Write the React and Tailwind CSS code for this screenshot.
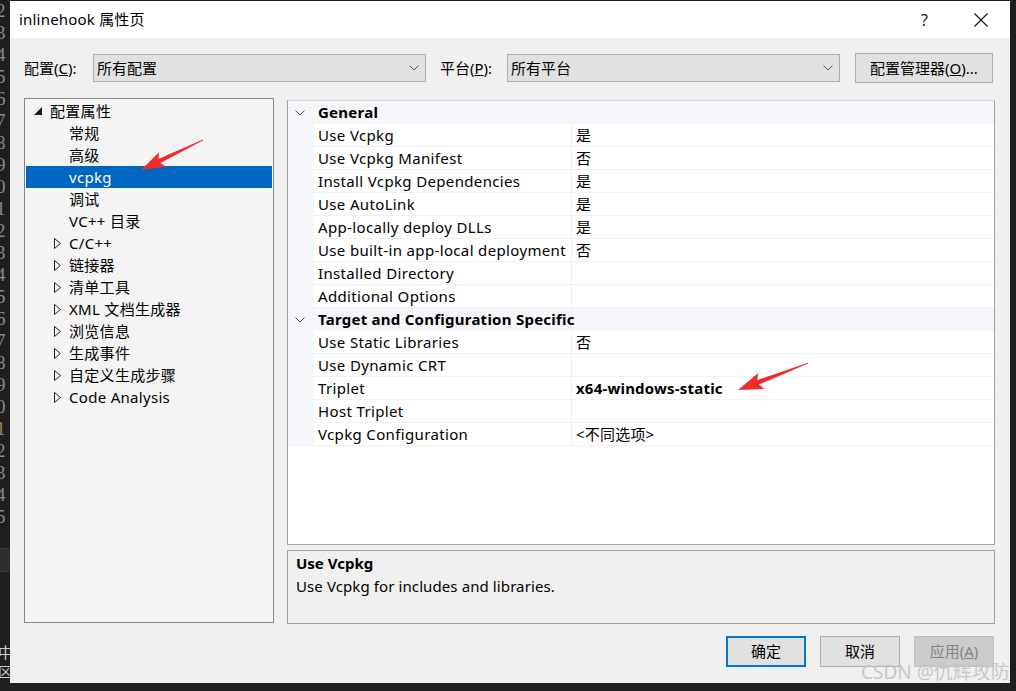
import React from "react";

const FONT = { fontFamily: '"Noto Sans", "Noto Sans CJK SC", sans-serif' };

const lineDigits = ["2","3","4","5","6","7","8","9","0","1","2","3","4","5","6","7","8","9","0","1","2","3","4","5"];

const treeItems = [
  { label: "配置属性", kind: "open" },
  { label: "常规", kind: "leaf" },
  { label: "高级", kind: "leaf" },
  { label: "vcpkg", kind: "leaf", selected: true },
  { label: "调试", kind: "leaf" },
  { label: "VC++ 目录", kind: "leaf" },
  { label: "C/C++", kind: "closed" },
  { label: "链接器", kind: "closed" },
  { label: "清单工具", kind: "closed" },
  { label: "XML 文档生成器", kind: "closed" },
  { label: "浏览信息", kind: "closed" },
  { label: "生成事件", kind: "closed" },
  { label: "自定义生成步骤", kind: "closed" },
  { label: "Code Analysis", kind: "closed" },
];

const gridRows = [
  { header: "General" },
  { name: "Use Vcpkg", value: "是" },
  { name: "Use Vcpkg Manifest", value: "否" },
  { name: "Install Vcpkg Dependencies", value: "是" },
  { name: "Use AutoLink", value: "是" },
  { name: "App-locally deploy DLLs", value: "是" },
  { name: "Use built-in app-local deployment", value: "否" },
  { name: "Installed Directory", value: "" },
  { name: "Additional Options", value: "" },
  { header: "Target and Configuration Specific" },
  { name: "Use Static Libraries", value: "否" },
  { name: "Use Dynamic CRT", value: "" },
  { name: "Triplet", value: "x64-windows-static", bold: true },
  { name: "Host Triplet", value: "" },
  { name: "Vcpkg Configuration", value: "<不同选项>" },
];

function Chevron({ className = "" }) {
  return (
    <svg width="10" height="6" viewBox="0 0 10 6" className={className}>
      <path d="M0.5 0.5 L5 5 L9.5 0.5" fill="none" stroke="#555" strokeWidth="1" />
    </svg>
  );
}

function Select({ text }) {
  return (
    <div className="w-[333px] h-[28px] bg-[#e1e1e1] border border-[#adadad] flex items-center justify-between pl-[3px] pr-[6px]">
      <span className="text-[15px] text-black">{text}</span>
      <Chevron />
    </div>
  );
}

function TreeRow({ item }) {
  const sel = item.selected;
  return (
    <div className={`h-[22px] flex items-center tracking-[0.3px] ${sel ? "bg-[#0067c0] text-white" : "text-black"}`}>
      {item.kind === "open" && (
        <>
          <svg width="8" height="8" viewBox="0 0 8 8" className="ml-[8px]"><path d="M8 0 L8 8 L0 8 Z" fill="#1a1a1a" /></svg>
          <span className="ml-[8px] text-[15px]">{item.label}</span>
        </>
      )}
      {item.kind === "closed" && (
        <>
          <svg width="7" height="11" viewBox="0 0 7 11" className="ml-[28px]"><path d="M0.5 0.5 L6.5 5.5 L0.5 10.5 Z" fill="none" stroke="#222" strokeWidth="1" /></svg>
          <span className="ml-[8px] text-[15px]">{item.label}</span>
        </>
      )}
      {item.kind === "leaf" && <span className="ml-[43px] text-[15px]">{item.label}</span>}
    </div>
  );
}

function GridRow({ row }) {
  if (row.header) {
    return (
      <div className="h-[23px] flex items-center bg-[#f4f6f9]">
        <div className="w-[30px] flex pl-[7px]">
          <Chevron />
        </div>
        <span className="text-[15px] font-bold text-black tracking-[0.25px]">{row.header}</span>
      </div>
    );
  }
  return (
    <div className="h-[23px] flex">
      <div className="w-[26px] bg-[#f4f6f9]" />
      <div className="w-[258px] bg-white border-b border-[#eef1f5] border-r flex items-center pl-[4px] text-[15px] text-black whitespace-nowrap overflow-hidden tracking-[0.35px]">
        {row.name}
      </div>
      <div className={`flex-1 bg-white border-b border-[#eef1f5] flex items-center pl-[4px] text-[15px] text-black tracking-[0.2px] ${row.bold ? "font-bold" : ""}`}>
        {row.value}
      </div>
    </div>
  );
}

function Button({ children, primary, disabled }) {
  return (
    <div
      className={`w-[80px] h-[31px] flex items-center justify-center text-[15px] ${
        primary
          ? "bg-[#e1e1e1] border-2 border-[#0078d7] text-black"
          : disabled
          ? "bg-[#cccccc] border border-[#bfbfbf] text-[#838383]"
          : "bg-[#e1e1e1] border border-[#adadad] text-black"
      }`}
    >
      {children}
    </div>
  );
}

export default function App() {
  return (
    <div className="relative w-[1016px] h-[691px] bg-[#1e1e1e] flex overflow-hidden" style={FONT}>
      {/* left code-editor strip */}
      <div className="w-[10px] h-full flex flex-col overflow-hidden bg-[#1e1e1e]">
        <div className="flex flex-col">
          {lineDigits.map((d, i) => (
            <div
              key={i}
              className={`h-[22px] leading-[22px] text-[19px] -ml-[4px] ${i === 19 ? "text-[#a0825a]" : "text-[#8a8a8a]"}`}
              style={{ fontFamily: '"Liberation Serif", serif' }}
            >
              {d}
            </div>
          ))}
        </div>
        <div className="mt-[20px] h-[24px] bg-[#2d2d30] border-y border-[#3c3c3c]" />
        <div className="mt-[70px] text-[15px] leading-[20px] text-[#cfcfcf] -ml-[2px]">中</div>
        <div className="text-[14px] leading-[20px] text-[#cfcfcf] -ml-[2px]">区</div>
      </div>

      {/* dialog */}
      <div className="w-[1000px] h-[682px] mt-[1px] bg-[#f0f0f0] flex flex-col">
        {/* title bar */}
        <div className="h-[37px] bg-white flex items-center pl-[9px] pr-[22px]">
          <span className="text-[15px] text-black tracking-[0.2px]">inlinehook 属性页</span>
          <span className="ml-auto text-[16px] text-[#222]">?</span>
          <svg width="14" height="14" viewBox="0 0 14 14" className="ml-[46px]">
            <path d="M0.5 0.5 L13.5 13.5 M13.5 0.5 L0.5 13.5" stroke="#111" strokeWidth="1.1" />
          </svg>
        </div>

        {/* config row */}
        <div className="flex items-center pl-[14px] mt-[15px] h-[30px]">
          <span className="text-[15px] text-black w-[69px]">配置(<span className="underline">C</span>):</span>
          <Select text="所有配置" />
          <span className="text-[15px] text-black ml-[14px] w-[67px]">平台(<span className="underline">P</span>):</span>
          <Select text="所有平台" />
          <div className="ml-[15px] w-[138px] h-[30px] bg-[#e1e1e1] border border-[#adadad] flex items-center justify-center text-[15px] text-black">
            配置管理器(<span className="underline">O</span>)...
          </div>
        </div>

        {/* main area */}
        <div className="flex pl-[14px] mt-[15px] h-[526px]">
          {/* tree */}
          <div className="w-[250px] h-[525px] bg-[#f4f4f4] border border-[#828790] px-[1px] pt-[1px]">
            {treeItems.map((it, i) => (
              <TreeRow key={i} item={it} />
            ))}
          </div>

          {/* right */}
          <div className="ml-[13px] w-[708px] flex flex-col pt-[2px]">
            <div className="h-[446px] bg-white border border-[#a0a0a0] border-t-[#d5d5d5]">
              {gridRows.map((r, i) => (
                <GridRow key={i} row={r} />
              ))}
            </div>
            <div className="mt-[5px] h-[74px] bg-[#f0f0f0] border border-[#a0a0a0] px-[8px] pt-[1px]">
              <div className="text-[15px] font-bold text-black leading-[23px]">Use Vcpkg</div>
              <div className="text-[15px] text-black leading-[23px] tracking-[0.1px]">Use Vcpkg for includes and libraries.</div>
            </div>
          </div>
        </div>

        {/* buttons */}
        <div className="flex justify-end gap-[14px] pr-[16px] mt-[12px]">
          <Button primary>确定</Button>
          <Button>取消</Button>
          <Button disabled>应用(<span className="underline">A</span>)</Button>
        </div>
      </div>

      {/* right dark strip */}
      <div className="flex-1 h-full bg-[#1e1e1e]" />

      {/* overlays: red arrows */}
      <svg className="absolute left-0 top-0 pointer-events-none" width="1016" height="691" viewBox="0 0 1016 691">
        <g transform="translate(141 170) rotate(-25.8)">
          <polygon points="0,0 24,-8 20.5,-2.2 69,-0.4 69,0.4 20.5,2.2 24,8" fill="#ef2b2b" />
        </g>
        <g transform="translate(738 390) rotate(-21)">
          <polygon points="0,0 25,-8.5 21.5,-2.4 75,-0.4 75,0.4 21.5,2.4 25,8.5" fill="#ef2b2b" />
        </g>
      </svg>

      {/* watermark */}
      <div className="absolute left-[861px] top-[659px] text-[19px] leading-[26px] text-[#c4c4c4] pointer-events-none whitespace-nowrap opacity-90">
        CSDN @仇辉攻防
      </div>
    </div>
  );
}
